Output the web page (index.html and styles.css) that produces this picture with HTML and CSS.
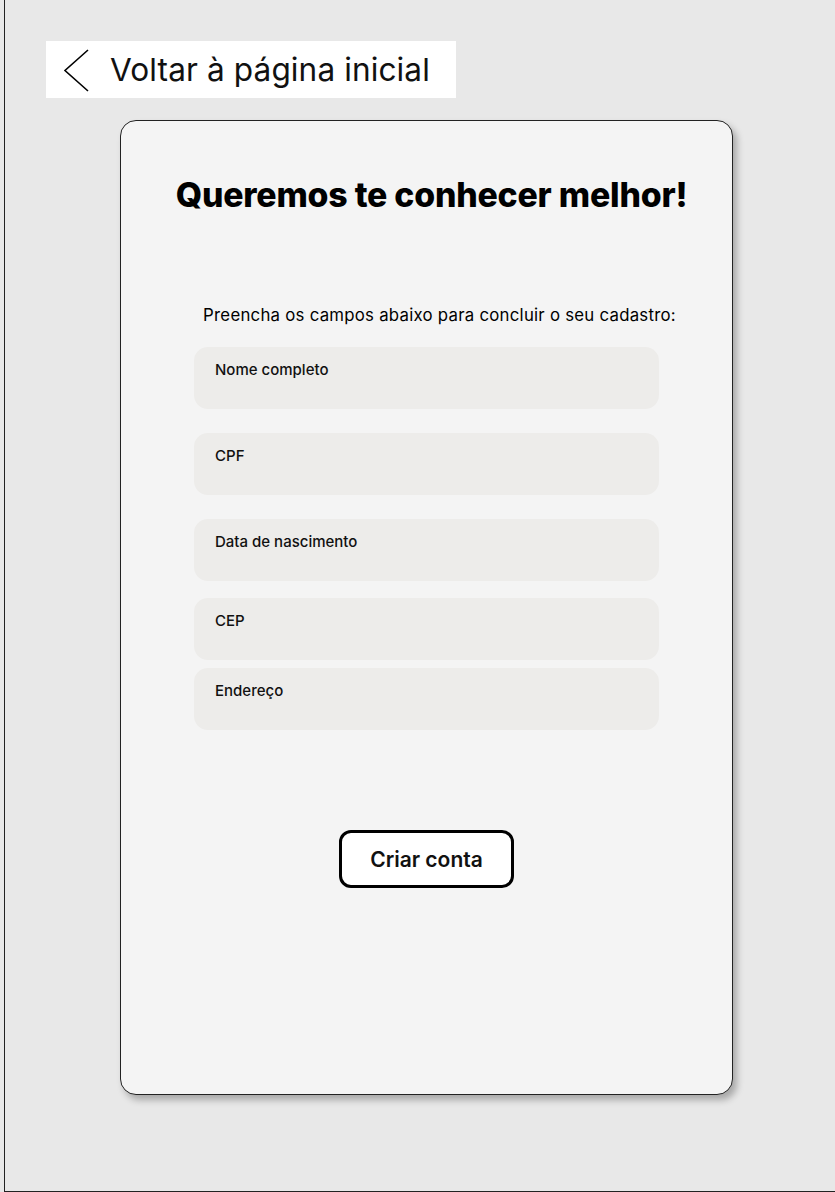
FILE: index.html
```html
<!DOCTYPE html>
<html lang="pt-BR">
<head>
<meta charset="utf-8">
<title>Cadastro</title>
<link rel="stylesheet" href="styles.css">
</head>
<body>
<div class="frame">
  <a class="back" href="#">
    <svg class="back-icon" width="28" height="44" viewBox="0 0 28 44" aria-hidden="true">
      <path d="M25 2 L2 22.5 L25 43" fill="none" stroke="#000" stroke-width="1.6" stroke-linejoin="miter"/>
    </svg>
    <span class="back-text">Voltar à página inicial</span>
  </a>
  <main class="card">
    <h1 class="title">Queremos te conhecer melhor!</h1>
    <p class="subtitle">Preencha os campos abaixo para concluir o seu cadastro:</p>
    <form class="form">
      <label class="field">Nome completo</label>
      <label class="field field-gap-24">CPF</label>
      <label class="field field-gap-24">Data de nascimento</label>
      <label class="field field-gap-17">CEP</label>
      <label class="field field-gap-8">Endereço</label>
      <button class="submit" type="button">Criar conta</button>
    </form>
  </main>
</div>
</body>
</html>
```

FILE: styles.css
```css
* { box-sizing: border-box; }
html, body { margin: 0; padding: 0; }
body {
  background: #e8e8e8;
  font-family: Inter, "Liberation Sans", sans-serif;
  color: #000;
}
.frame {
  margin-left: 4px;
  height: 1192px;
  border-left: 1px solid #222;
  border-bottom: 1px solid #222;
  padding: 41px 0 0 41px;
  display: flex;
  flex-direction: column;
  align-items: flex-start;
}
.back {
  display: flex;
  align-items: center;
  width: 410px;
  height: 57px;
  background: #fff;
  text-decoration: none;
  color: #111;
  padding-left: 17px;
}
.back-icon { display: block; margin-right: 19px; margin-top: 1px; }
.back-text {
  font-size: 31.6px;
  font-weight: 400;
  letter-spacing: 0.1px;
  line-height: 1;
}
.card {
  margin: 22px 0 0 74px;
  width: 613px;
  height: 975px;
  background: #f4f4f4;
  border: 1px solid #222;
  border-radius: 16px;
  box-shadow: 4px 5px 7px rgba(0, 0, 0, 0.28);
  display: flex;
  flex-direction: column;
  align-items: center;
  padding-top: 52px;
}
.title {
  margin: 0 0 0 10px;
  font-family: Inter, sans-serif;
  font-weight: 800;
  font-size: 33.8px;
  letter-spacing: -0.2px;
  line-height: 44px;
}
.subtitle {
  margin: 87px 0 0 26px;
  font-size: 16.8px;
  line-height: 22px;
  letter-spacing: 0.25px;
  font-weight: 400;
}
.form {
  margin-top: 21px;
  display: flex;
  flex-direction: column;
  align-items: center;
}
.field {
  display: block;
  width: 465px;
  height: 62px;
  background: #edecea;
  border-radius: 14px;
  padding: 15px 0 0 21px;
  font-size: 15px;
  line-height: 16px;
  font-weight: 500;
  color: #111;
}
.field-gap-24 { margin-top: 24px; }
.field-gap-17 { margin-top: 17px; }
.field-gap-8 { margin-top: 8px; }
.submit {
  margin-top: 100px;
  width: 175px;
  height: 58px;
  background: #fff;
  border: 3px solid #000;
  border-radius: 12px;
  font-family: Inter, sans-serif;
  font-size: 21px;
  font-weight: 600;
  color: #111;
  cursor: pointer;
}
```
